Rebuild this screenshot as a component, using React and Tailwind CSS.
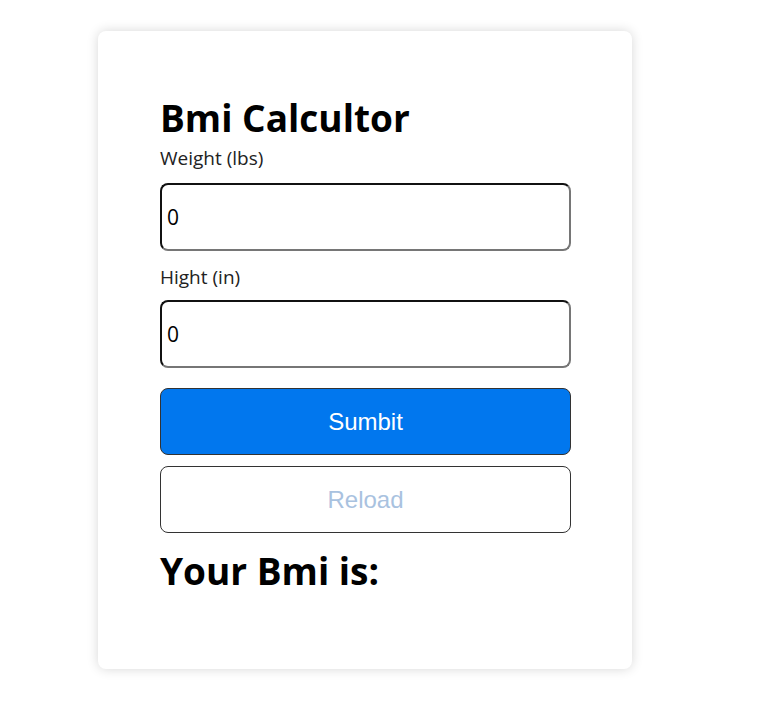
export default function App() {
  return (
    <div className="min-h-[701px] w-[784px] bg-white pt-[31px] pl-[98px]" style={{ fontFamily: '"Open Sans", "Noto Sans", sans-serif' }}>
      <div className="w-[534px] h-[638px] rounded-lg bg-white shadow-[0_0_12px_rgba(0,0,0,0.16)] px-[62px] pt-[64px]">
        <h1 className="text-[37px] font-bold leading-[46px] text-black">Bmi Calcultor</h1>
        <label className="block text-[19px] leading-[26px] text-[#222] mt-[4px]">Weight (lbs)</label>
        <input
          type="text"
          defaultValue="0"
          className="mt-[12px] block w-[411px] h-[68px] rounded-lg border-2 border-t-[#111] border-l-[#111] border-r-[#767676] border-b-[#767676] px-[5px] text-[21px] text-black outline-none"
        />
        <label className="block text-[19px] leading-[26px] text-[#222] mt-[13px]">Hight (in)</label>
        <input
          type="text"
          defaultValue="0"
          className="mt-[10px] block w-[411px] h-[68px] rounded-lg border-2 border-t-[#111] border-l-[#111] border-r-[#767676] border-b-[#767676] px-[5px] text-[21px] text-black outline-none"
        />
        <button
          className="mt-[20px] block w-[411px] h-[67px] rounded-lg border border-[#333] bg-[#0177ee] text-white text-[24px]"
          style={{ fontFamily: '"Liberation Sans", Arial, sans-serif' }}
        >
          Sumbit
        </button>
        <button
          className="mt-[11px] block w-[411px] h-[67px] rounded-lg border border-[#333] bg-white text-[#a9c2df] text-[24px]"
          style={{ fontFamily: '"Liberation Sans", Arial, sans-serif' }}
        >
          Reload
        </button>
        <h2 className="mt-[15px] text-[37px] font-bold leading-[46px] text-black">Your Bmi is:</h2>
      </div>
    </div>
  );
}
